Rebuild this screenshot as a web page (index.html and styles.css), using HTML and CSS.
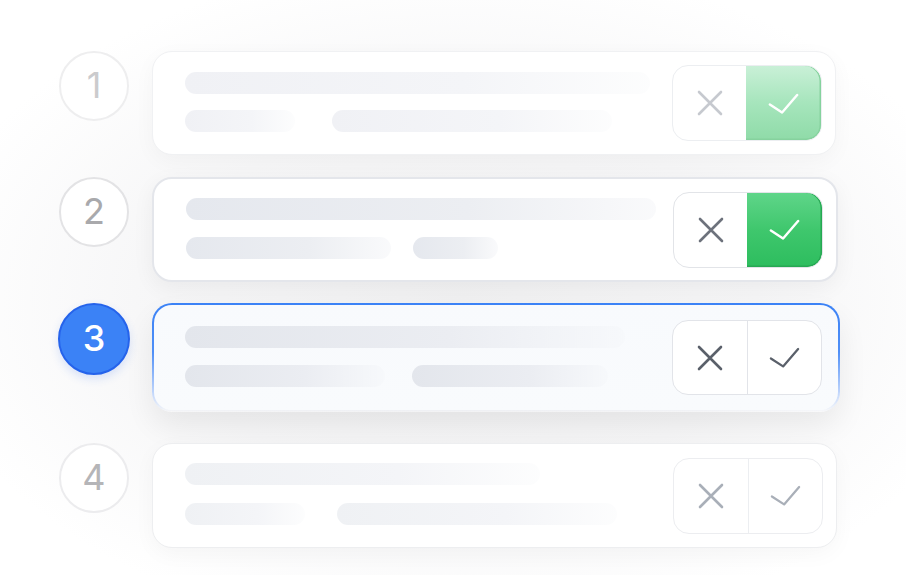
FILE: index.html
```html
<!DOCTYPE html>
<html>
<head>
<meta charset="utf-8">
<link rel="stylesheet" href="styles.css">
</head>
<body>
<main class="stack">
  <section class="row row-1">
    <div class="num">1</div>
    <div class="card">
      <div class="bars">
        <div class="bar" style="width:465px"></div>
        <div class="bar-line gap-37">
          <div class="bar" style="width:110px"></div>
          <div class="bar" style="width:280px"></div>
        </div>
      </div>
      <div class="actions">
        <div class="btn btn-x"><svg viewBox="0 0 26 26"><path d="M2 2L24 24M24 2L2 24"/></svg></div>
        <div class="btn btn-ok"><svg viewBox="0 0 33 22"><path d="M2 12L15 20.5L31 2"/></svg></div>
      </div>
    </div>
  </section>

  <section class="row row-2">
    <div class="num">2</div>
    <div class="card">
      <div class="bars">
        <div class="bar" style="width:470px"></div>
        <div class="bar-line gap-22">
          <div class="bar" style="width:205px"></div>
          <div class="bar" style="width:85px"></div>
        </div>
      </div>
      <div class="actions">
        <div class="btn btn-x"><svg viewBox="0 0 26 26"><path d="M2 2L24 24M24 2L2 24"/></svg></div>
        <div class="btn btn-ok"><svg viewBox="0 0 33 22"><path d="M2 12L15 20.5L31 2"/></svg></div>
      </div>
    </div>
  </section>

  <section class="row row-3">
    <div class="num">3</div>
    <div class="card">
      <div class="bars">
        <div class="bar" style="width:440px"></div>
        <div class="bar-line gap-27">
          <div class="bar" style="width:200px"></div>
          <div class="bar" style="width:196px"></div>
        </div>
      </div>
      <div class="actions">
        <div class="btn btn-x"><svg viewBox="0 0 26 26"><path d="M2 2L24 24M24 2L2 24"/></svg></div>
        <div class="btn btn-ok"><svg viewBox="0 0 33 22"><path d="M2 12L15 20.5L31 2"/></svg></div>
      </div>
    </div>
  </section>

  <section class="row row-4">
    <div class="num">4</div>
    <div class="card">
      <div class="bars">
        <div class="bar" style="width:355px"></div>
        <div class="bar-line gap-32">
          <div class="bar" style="width:120px"></div>
          <div class="bar" style="width:280px"></div>
        </div>
      </div>
      <div class="actions">
        <div class="btn btn-x"><svg viewBox="0 0 26 26"><path d="M2 2L24 24M24 2L2 24"/></svg></div>
        <div class="btn btn-ok"><svg viewBox="0 0 33 22"><path d="M2 12L15 20.5L31 2"/></svg></div>
      </div>
    </div>
  </section>
</main>
</body>
</html>
```

FILE: styles.css
```css
* { box-sizing: border-box; }

html, body {
  margin: 0;
  padding: 0;
}

body {
  width: 906px;
  height: 575px;
  overflow: hidden;
  background: radial-gradient(ellipse 540px 340px at 460px 300px, #f1f1f2 0%, #f6f6f7 55%, #ffffff 100%);
  font-family: Inter, "Liberation Sans", sans-serif;
}

.stack {
  display: flex;
  flex-direction: column;
  padding: 51px 0 0 59px;
}

.row {
  display: flex;
  align-items: flex-start;
  gap: 23px;
}

.row-2 { margin-top: 22px; }
.row-3 { margin-top: 21px; }
.row-4 { margin-top: 31px; }

.num {
  width: 70px;
  height: 70px;
  flex: none;
  border-radius: 50%;
  border: 2px solid #eeeeef;
  background: #ffffff;
  display: flex;
  align-items: center;
  justify-content: center;
  font-size: 36px;
  font-weight: 400;
  color: #cbcbcd;
  line-height: 1;
  padding-bottom: 2px;
}

.row-2 .num { border-color: #e3e3e5; color: #a9a9ac; }
.row-4 .num { border-color: #ececee; color: #b5b5b8; }
.row-3 .num {
  width: 72px;
  height: 72px;
  background: #3b82f6;
  border: 2.5px solid #2563eb;
  color: #ffffff;
  font-weight: 500;
  box-shadow: 0 4px 10px rgba(37, 99, 235, 0.16);
  margin-left: -1px;
  margin-right: -1px;
}

.card {
  width: 684px;
  height: 104px;
  border-radius: 20px;
  background: #ffffff;
  border: 1.5px solid #f0f1f3;
  display: flex;
  align-items: center;
  padding: 0 13px 0 32px;
  box-shadow: 0 6px 22px rgba(0, 0, 0, 0.035);
}

.row-2 .card {
  height: 105px;
  width: 686px;
  border: 2px solid #e4e6eb;
  box-shadow: 0 6px 22px rgba(0, 0, 0, 0.05);
}

.row-3 .card {
  width: 688px;
  height: 109px;
  border: 2px solid transparent;
  background:
    linear-gradient(#f8fafd, #f9fbfd) padding-box,
    linear-gradient(180deg, #3b82f6 0%, #4f8ff7 45%, #b9d1fb 80%, rgba(255, 255, 255, 0) 100%) border-box;
  padding: 0 16px 0 31px;
  box-shadow: 0 14px 30px rgba(0, 0, 0, 0.07);
}

.row-4 .card {
  width: 685px;
  height: 105px;
  border: 1.5px solid #edeef0;
}

.bars {
  flex: 1;
  display: flex;
  flex-direction: column;
  gap: 16px;
  margin-bottom: 3px;
}

.row-2 .bars { gap: 17px; }
.row-3 .bars { gap: 17px; margin-bottom: 2px; }
.row-4 .bars { gap: 18px; margin-bottom: 4px; }

.bar-line { display: flex; }
.gap-22 { gap: 22px; }
.gap-27 { gap: 27px; }
.gap-32 { gap: 32px; }
.gap-37 { gap: 37px; }

.bar {
  height: 22px;
  border-radius: 11px;
  background: linear-gradient(90deg, #f0f1f5 0%, #f4f5f8 60%, rgba(249, 250, 251, 0.4) 100%);
}

.row-2 .bar {
  background: linear-gradient(90deg, #e5e8ee 0%, #eceef2 60%, rgba(244, 245, 248, 0.5) 100%);
}

.row-3 .bar {
  background: linear-gradient(90deg, #e3e6ec 0%, #ebedf2 60%, rgba(244, 246, 249, 0.4) 100%);
}

.row-4 .bar {
  background: linear-gradient(90deg, #eff1f4 0%, #f4f5f8 60%, rgba(249, 250, 251, 0.4) 100%);
}

.actions {
  width: 150px;
  height: 76px;
  flex: none;
  display: flex;
  border: 1.5px solid #eceef1;
  border-radius: 16px;
  overflow: hidden;
  background: #ffffff;
}

.row-2 .actions { border-color: #e2e4e8; }
.row-3 .actions { border-color: #e2e4e9; height: 75px; }
.row-4 .actions { border-color: #ecedf0; }

.btn {
  display: flex;
  align-items: center;
  justify-content: center;
}

.btn-x { width: 73px; }
.btn-ok { flex: 1; }

.btn svg { fill: none; stroke-linecap: round; stroke-linejoin: round; }
.btn-x svg { width: 26px; height: 26px; stroke-width: 2.6; }
.btn-ok svg { width: 31px; height: 21px; stroke-width: 2.6; }

.row-1 .btn-x svg { stroke: #c6c9cf; }
.row-1 .btn-ok {
  background: linear-gradient(180deg, #c9f0d7 0%, #a6e5bc 50%, #8fdba8 100%);
  box-shadow: inset -1.5px 0 0 #86d29e, inset 0 -1.5px 0 #86d29e;
  border-radius: 0 15px 15px 0;
}
.row-1 .btn-ok svg { stroke: #ffffff; }

.row-2 .btn-x svg { stroke: #6d727c; }
.row-2 .btn-ok {
  background: linear-gradient(180deg, #5fd589 0%, #3fc76d 50%, #2dbd5e 100%);
  box-shadow: inset -1.5px 0 0 #27a853, inset 0 -1.5px 0 #27a853;
  border-radius: 0 15px 15px 0;
}
.row-2 .btn-ok svg { stroke: #ffffff; }

.row-3 .btn-x { width: 74px; }
.row-3 .btn-ok { border-left: 1.5px solid #e2e4e9; }
.row-3 .btn-x svg { stroke: #5a606a; }
.row-3 .btn-ok svg { stroke: #5a606a; stroke-width: 2.4; }

.row-4 .btn-x { width: 74px; }
.row-4 .btn-ok { border-left: 1.5px solid #eceef1; }
.row-4 .btn-x svg { stroke: #a9afb8; }
.row-4 .btn-ok svg { stroke: #a9afb8; stroke-width: 2.4; }
```
